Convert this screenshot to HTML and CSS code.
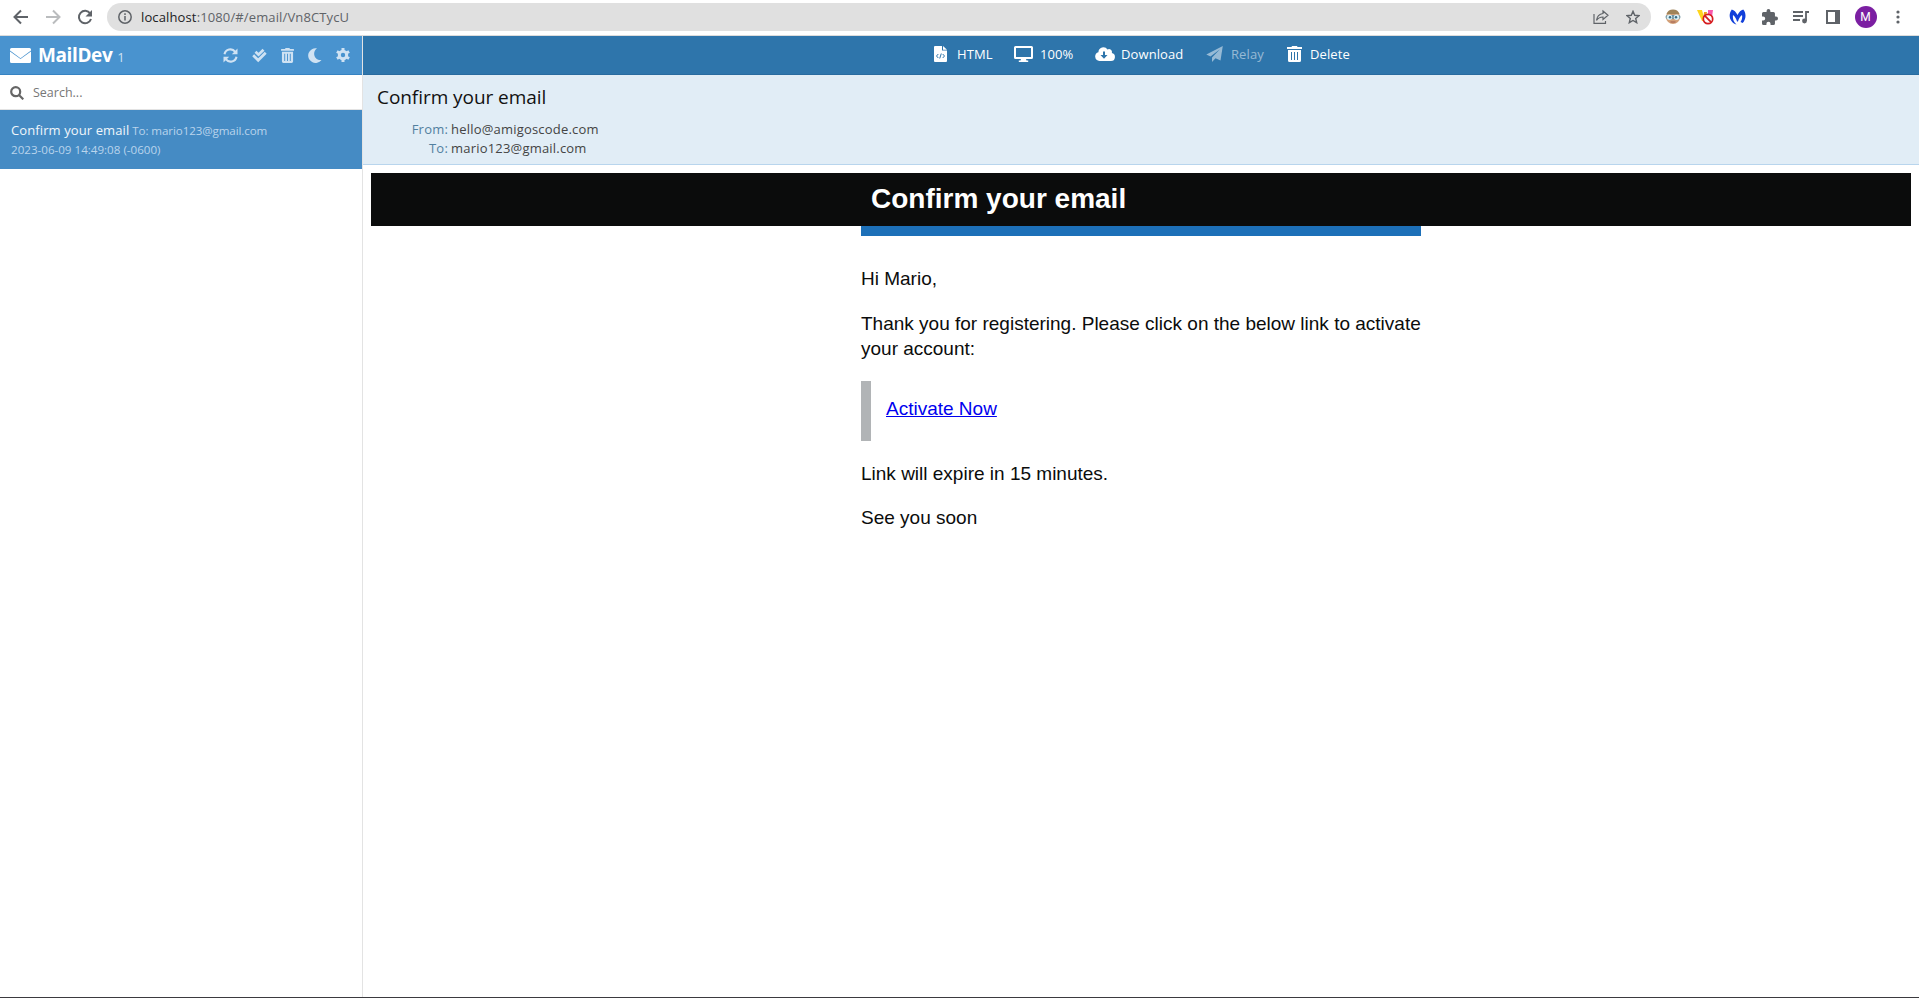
FILE: index.html
```
<!DOCTYPE html>
<html lang="en">
<head>
<meta charset="utf-8">
<title>MailDev</title>
<link rel="stylesheet" href="styles.css">
</head>
<body>
<svg class="defs" aria-hidden="true">
  <symbol id="trash" viewBox="0 0 448 512"><path fill="currentColor" d="M432 32H312l-9-19A24 24 0 0 0 281 0H167a24 24 0 0 0-22 13l-9 19H16A16 16 0 0 0 0 48v32a16 16 0 0 0 16 16h416a16 16 0 0 0 16-16V48a16 16 0 0 0-16-16z"/><path fill="currentColor" fill-rule="evenodd" d="M32 128h384v336a48 48 0 0 1-48 48H80a48 48 0 0 1-48-48zm80 64v256h32V192zm96 0v256h32V192zm96 0v256h32V192z"/></symbol>
</svg>
<div class="browser">
  <div class="nav">
    <svg width="16" height="16" viewBox="0 0 16 16" fill="none" stroke="#5f6368" stroke-width="2"><path d="M15 8H2M8 1.5L1.5 8 8 14.5"/></svg>
    <svg width="16" height="16" viewBox="0 0 16 16" fill="none" stroke="#babcbe" stroke-width="2"><path d="M1 8h13M8 1.5L14.500 8 8 14.500"/></svg>
    <svg width="16" height="16" viewBox="0 0 16 16"><path d="M13.200 4.500A6.200 6.200 0 1 0 14 10" fill="none" stroke="#5f6368" stroke-width="2"/><path d="M15 1v6.500H8.500z" fill="#5f6368"/></svg>
  </div>
  <div class="address">
    <svg width="14" height="14" viewBox="0 0 14 14" fill="none" stroke="#5f6368" stroke-width="1.500"><circle cx="7" cy="7" r="6.200"/><path d="M7 6v4.500M7 3.300v1.600"/></svg>
    <span class="url"><b>localhost</b>:1080/#/email/Vn8CTycU</span>
    <svg width="16" height="16" viewBox="0 0 16 16" fill="none" stroke="#5f6368" stroke-width="1.200"><path d="M1 5v9.400h11.500V12M10 2l5 4.300-5 4.200V8C7 8 5 9 3.500 11.300 4 7.500 6.500 5 10 4.500z"/></svg>
    <svg width="14" height="14" viewBox="0 0 14 14" fill="none" stroke="#5f6368" stroke-width="1.400"><path d="M7 1.300l1.700 4 4.300.400-3.300 2.800 1 4.200L7 10.500l-3.700 2.200 1-4.200L1 5.700l4.300-.400z"/></svg>
  </div>
  <div class="extensions">
    <svg width="16" height="16" viewBox="0 0 16 16"><circle cx="8" cy="8" r="7" fill="#d3a078"/><path d="M1.500 5a7 7 0 0 1 13 0z" fill="#a08358"/><rect x=".5" y="6" width="15" height="4" rx="2" fill="#7293a0"/><circle cx="4.500" cy="8.300" r="2.700" fill="#d8eef5"/><circle cx="11.500" cy="8.300" r="2.700" fill="#d8eef5"/><circle cx="5" cy="8.300" r="1.200" fill="#386b83"/><circle cx="11" cy="8.300" r="1.200" fill="#386b83"/><path d="M5.500 13h5" stroke="#9c5b4d"/></svg>
    <svg width="17" height="16" viewBox="0 0 17 16"><path d="M0 1h5l3 11H5z" fill="#ffd51c"/><path d="M7 3h3l-2 9H6z" fill="#ef9b18"/><path d="M11 1h5l-1 7h-4z" fill="#f857ac"/><circle cx="11" cy="10" r="4.700" fill="#fff" stroke="#d51c20" stroke-width="1.700"/><path d="M7.700 6.700l6.600 6.600" stroke="#d51c20" stroke-width="1.800"/></svg>
    <svg width="17" height="16" viewBox="0 0 17 16"><path d="M2.800.500C5 1 7 3 8.500 6 10 3 12 1 14.200.500c3.300 3.500 3 9.500-.5 13.500l-2.200-1c1.500-2 2-4.500 1.500-7C11 7.500 9.500 10 9 12.500H8C7.500 10 6 7.500 4 6c-.5 3.500.5 7 3.500 9.500C1 14-1.500 6 2.800.500z" fill="#113fda"/></svg>
    <svg width="16" height="16" viewBox="2 1 21 21"><path fill="#5f6368" d="M20.500 11H19V7a2 2 0 0 0-2-2h-4V3.500a2.500 2.500 0 0 0-5 0V5H4a2 2 0 0 0-2 2v3.800h1.500a2.700 2.700 0 0 1 0 5.400H2V20a2 2 0 0 0 2 2h3.800v-1.500a2.700 2.700 0 0 1 5.400 0V22H17a2 2 0 0 0 2-2v-4h1.500a2.500 2.500 0 0 0 0-5z"/></svg>
    <svg width="17" height="14" viewBox="0 0 17 14"><path d="M0 2h10M0 6h10M0 10h7" stroke="#5f6368" stroke-width="1.800"/><path d="M13 11V2h3" fill="none" stroke="#5f6368" stroke-width="1.800"/><circle cx="11.500" cy="11" r="2.400" fill="#5f6368"/></svg>
    <svg width="14" height="14" viewBox="0 0 14 14"><path fill="#5f6368" fill-rule="evenodd" d="M0 0h14v14H0zm2 2v10h7V2z"/></svg>
    <span class="avatar">M</span>
    <svg class="kebab" width="4" height="14" viewBox="0 0 4 14" fill="#5f6368"><circle cx="2" cy="2" r="1.600"/><circle cx="2" cy="7" r="1.600"/><circle cx="2" cy="12" r="1.600"/></svg>
  </div>
</div>
<div class="app">
  <aside class="sidebar">
    <div class="brandbar">
      <svg class="envelope" width="21" height="15" viewBox="0 0 21 15"><path fill="#fff" d="M1.500 0h18A1.500 1.500 0 0 1 21 1.500v1L10.500 10.300 0 2.500v-1A1.500 1.500 0 0 1 1.500 0zM0 3.400l10.500 7.700L21 3.400v10.100a1.500 1.500 0 0 1-1.500 1.500h-18A1.500 1.500 0 0 1 0 13.500z"/></svg>
      <span class="brand">MailDev</span><span class="count">1</span>
      <div class="tools">
        <svg width="15" height="15" viewBox="0 0 15 15"><path d="M1.500 6.300a6 6 0 0 1 10.700-2.500M13.500 8.700a6 6 0 0 1-10.700 2.500" fill="none" stroke="currentColor" stroke-width="2.100"/><path fill="currentColor" d="M14.500.500v5.700H8.800zM.500 14.500V8.800h5.700z"/></svg>
        <svg width="15" height="15" viewBox="0 0 15 15" fill="none" stroke="currentColor" stroke-width="2.700"><path d="M3.500 3.700l3 3 5-5M1.200 7.300l5 5 7.500-7.500"/></svg>
        <svg width="13" height="15"><use href="#trash"/></svg>
        <svg width="14" height="15" viewBox="0 0 14 15"><path fill="currentColor" d="M9 .300A7.400 7.400 0 1 0 13.500 12C6.500 13 3.500 4.500 9 .300z"/></svg>
        <svg width="14" height="14" viewBox="0 0 14 14"><circle cx="7" cy="7" r="3.700" fill="none" stroke="currentColor" stroke-width="3"/><path d="M7 0v3M7 11v3M.900 3.500l2.700 1.500M10.400 9l2.700 1.500M.900 10.500L3.600 9M10.400 5l2.700-1.500" stroke="currentColor" stroke-width="3"/></svg>
      </div>
    </div>
    <div class="search">
      <svg width="14" height="14" viewBox="0 0 14 14" fill="none" stroke="#666" stroke-width="2.200"><circle cx="5.700" cy="5.700" r="4.500"/><path d="M9 9l4.300 4.300"/></svg>
      <span>Search...</span>
    </div>
    <div class="item">
      <div><span class="title">Confirm your email</span> <span class="meta">To: mario123@gmail.com</span></div>
      <div class="date">2023-06-09 14:49:08 (-0600)</div>
    </div>
  </aside>
  <main class="main">
    <div class="actions">
      <div class="action html"><svg width="13" height="16" viewBox="0 0 13 16"><path fill="#fff" d="M1 0h7v4.500h5V15a1 1 0 0 1-1 1H1a1 1 0 0 1-1-1V1a1 1 0 0 1 1-1zM9 0l4 3.700H9z"/><path d="M4.300 8L2.500 10l1.800 2M8.700 8l1.800 2-1.800 2M7.300 7.500l-1.600 5" stroke="#2e75ab" fill="none"/></svg><span>HTML</span></div>
      <div class="action zoom"><svg width="19" height="16" viewBox="0 0 19 16"><path fill="#fff" fill-rule="evenodd" d="M1.500 0h16A1.500 1.500 0 0 1 19 1.500v10a1.500 1.500 0 0 1-1.500 1.500H12l.5 1.500h1.700V16H4.800v-1.500h1.700L7 13H1.500A1.500 1.500 0 0 1 0 11.500v-10A1.500 1.500 0 0 1 1.500 0zM2 2v9h15V2z"/></svg><span>100%</span></div>
      <div class="action download"><svg width="20" height="14" viewBox="0 0 20 14"><path fill="#fff" d="M16.800 6.100A3 3 0 0 0 12.500 2.500 5 5 0 0 0 3.400 5.200 4.500 4.500 0 0 0 4.500 14H16a4 4 0 0 0 .8-7.900z"/><path fill="#2e75ab" d="M8 4.500h2V8h2.500L9 11.700 5.500 8H8z"/></svg><span>Download</span></div>
      <div class="action relay"><svg width="17" height="16" viewBox="0 0 17 16"><path fill="#fff" d="M16.800 0L14.500 14.500 9.500 12.300 6 16v-4.500L14 3.200 4.500 10.500.300 8.500z"/></svg><span>Relay</span></div>
      <div class="action delete"><svg width="15" height="16" viewBox="0 0 15 16"><path fill="#fff" fill-rule="evenodd" d="M0 1h4.500L5 0h5l.5 1H15v2H0zM1 4h13v10.500a1.500 1.500 0 0 1-1.500 1.500h-10A1.500 1.500 0 0 1 1 14.500zm3 2v8h1V6zm3 0v8h1V6zm3 0v8h1V6z"/></svg><span>Delete</span></div>
    </div>
    <header class="mailhead">
      <h1>Confirm your email</h1>
      <dl><dt>From:</dt><dd>hello@amigoscode.com</dd><dt>To:</dt><dd>mario123@gmail.com</dd></dl>
    </header>
    <article class="mail">
      <div class="banner"><div class="column">Confirm your email</div></div>
      <div class="content">
        <div class="stripe"></div>
        <p>Hi Mario,</p>
        <p>Thank you for registering. Please click on the below link to activate your account:</p>
        <blockquote><a href="#">Activate Now</a></blockquote>
        <p class="expiry">Link will expire in 15 minutes.</p>
        <p>See you soon</p>
      </div>
    </article>
  </main>
</div>
</body>
</html>
```
FILE: styles.css
```
* { box-sizing: border-box; }
body { margin: 0; height: 998px; overflow: hidden; display: flex; flex-direction: column; background: #fff; border-bottom: 1px solid #3b3a3f; font-family: "Open Sans", "Noto Sans", sans-serif; }
svg { display: block; flex: none; }
.defs { position: absolute; width: 0; height: 0; }
.browser { height: 36px; flex: none; display: flex; align-items: center; border-bottom: 1px solid #dcdcdc; padding: 0 17px 1px 13px; }
.nav { display: flex; gap: 16px; width: 94px; }
.address { flex: none; width: 1544px; height: 28px; border-radius: 14px; background: #e0e0e0; display: flex; align-items: center; padding: 0 11px; gap: 17px; }
.url { flex: 1; margin-left: -8px; font-size: 13px; letter-spacing: .13px; color: #5f6368; white-space: nowrap; }
.url b { font-weight: 400; color: #202124; }
.extensions { flex: 1; display: flex; align-items: center; gap: 15.600px; padding-left: 14px; }
.avatar { flex: none; width: 22px; height: 22px; margin-left: -1px; border-radius: 50%; background: #7b1fa2; color: #fff; font: 12px/22px Roboto, sans-serif; text-align: center; }
.kebab { margin-left: 4px; }
.app { flex: 1; display: flex; min-height: 0; }
.sidebar { width: 363px; flex: none; border-right: 1px solid #e3e3e3; }
.brandbar { height: 39px; width: 362px; background: #4993cf; border-bottom: 1px solid #3683c2; display: flex; align-items: center; padding: 0 12px 0 10px; }
.brand { margin-left: 7px; color: #fff; font-size: 19px; font-weight: 700; letter-spacing: -.4px; line-height: 36px; }
.count { margin: 4px 0 0 5px; color: #cfe2f3; font-size: 13px; }
.tools { margin-left: auto; display: flex; align-items: center; gap: 14px; color: #cfe2f3; }
.search { height: 35px; border-bottom: 1px solid #e3e3e3; display: flex; align-items: center; gap: 9px; padding: 1px 10px 0; font-size: 12.500px; color: #777; }
.item { height: 59px; background: #458bc4; color: #b9d4ec; padding: 11px 11px 0; font-size: 11.600px; line-height: 19px; white-space: nowrap; }
.title { color: #f0f6fb; font-size: 13px; letter-spacing: .1px; }
.meta { letter-spacing: -.1px; }
.main { flex: 1; min-width: 0; display: flex; flex-direction: column; }
.actions { height: 39px; flex: none; background: #2e75ab; border-bottom: 1px solid #286b9f; display: flex; align-items: center; padding: 0 0 2px 571px; color: #fff; font-size: 13px; letter-spacing: .1px; white-space: nowrap; }
.action { display: flex; align-items: center; gap: 9px; flex: none; }
.html { width: 80px; gap: 10px; }
.zoom { width: 81px; gap: 7px; }
.download { width: 111px; gap: 6px; }
.relay { width: 81px; gap: 8px; color: rgba(255, 255, 255, .5); }
.relay svg { opacity: .5; }
.delete { gap: 8px; }
.mailhead { height: 90px; flex: none; background: #e1edf6; border-bottom: 1px solid #b8d5ed; padding: 9px 14px; }
h1 { margin: 0; font-size: 19px; font-weight: 400; letter-spacing: -.06px; line-height: 26px; color: #111; }
dl { margin: 10px 0 0; display: grid; grid-template-columns: 71px 1fr; column-gap: 3px; font-size: 13px; letter-spacing: .2px; line-height: 19px; }
dt { text-align: right; color: #52809f; }
dd { margin: 0; color: #444; }
.mail { padding: 8px; font: 19px/25px "Liberation Sans", Arial, sans-serif; color: #0b0c0c; }
.banner { height: 53px; background: #0b0c0c; color: #fff; }
.column { width: 580px; margin: 0 auto; padding-left: 20px; font-size: 28px; font-weight: 700; line-height: 51px; }
.content { width: 560px; margin: 0 auto; }
.stripe { height: 10px; background: #1d70b8; margin-bottom: 30px; }
p { margin: 0 0 20px; }
.expiry { margin-bottom: 19px; }
blockquote { height: 60px; margin: 0 0 20px; padding: 15px 0 0 15px; border-left: 10px solid #b1b4b6; }
a { color: #00e; }
```
